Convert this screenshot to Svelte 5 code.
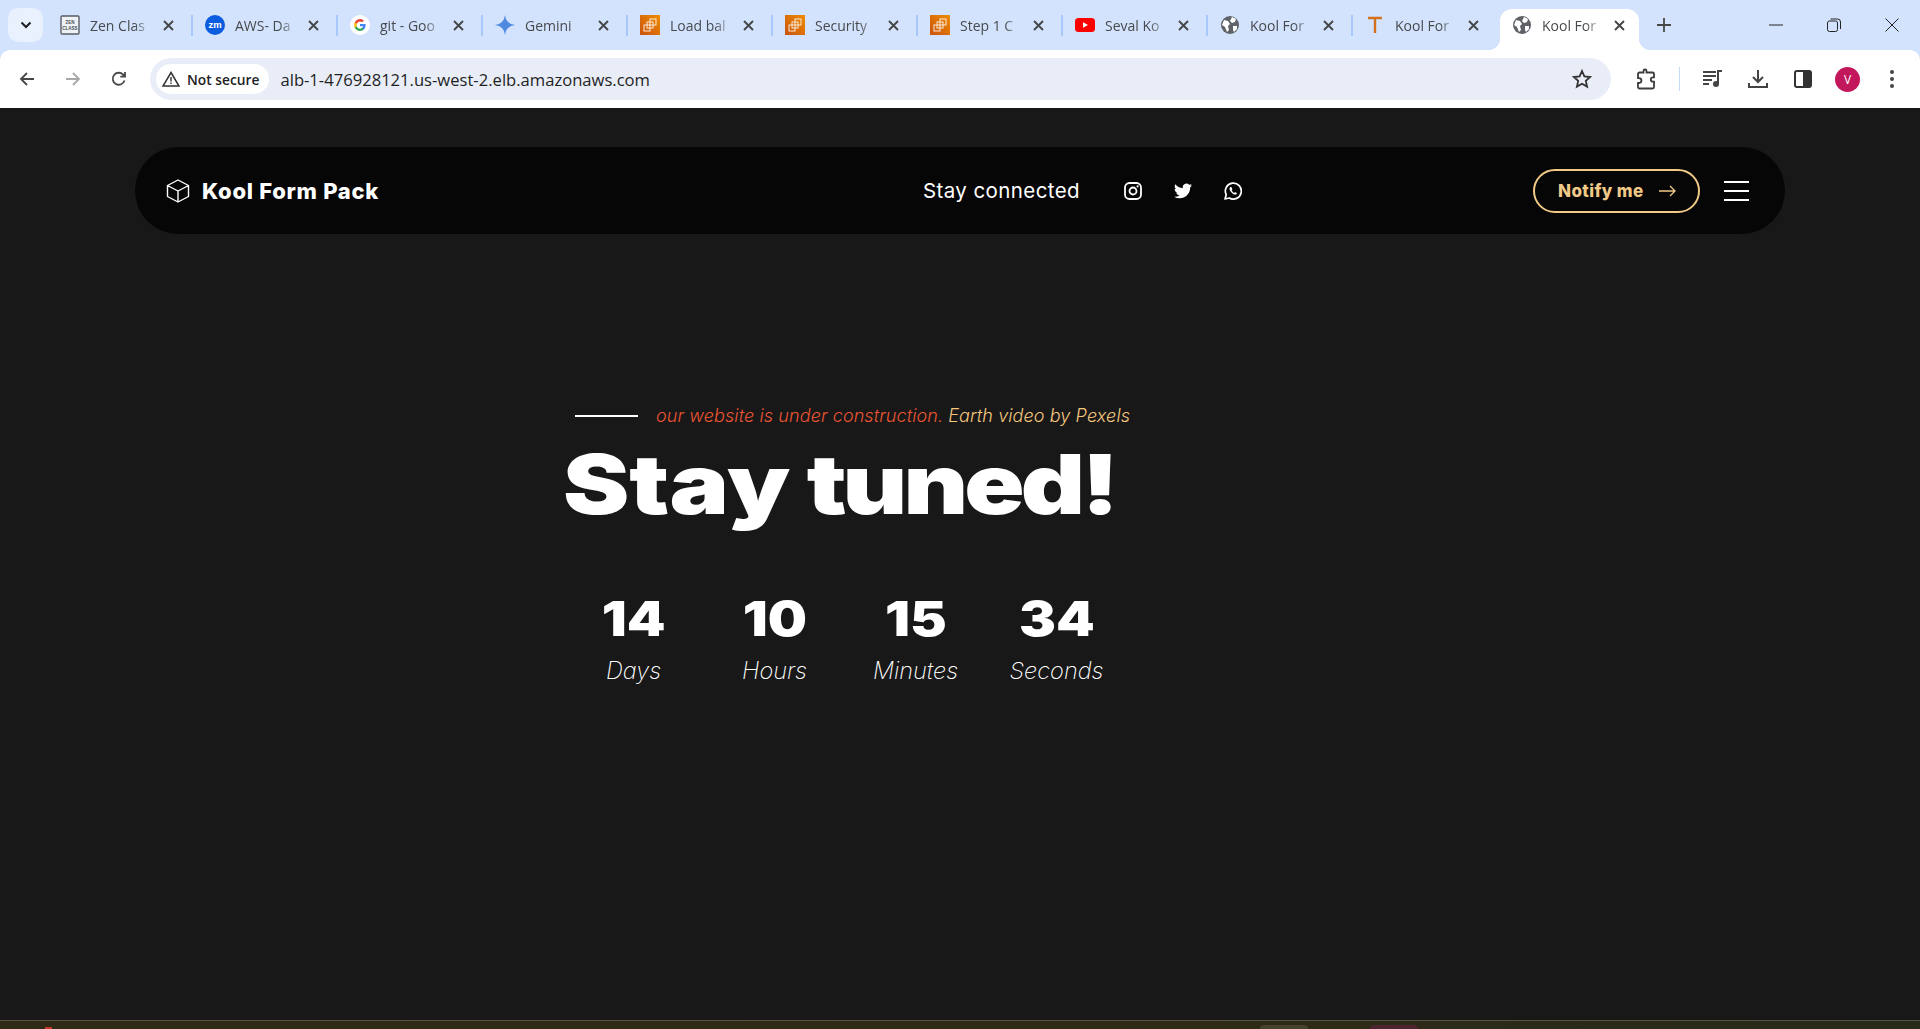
<script>
	const tabs = [
		{ title: 'Zen Clas', icon: 'zen' },
		{ title: 'AWS- Da', icon: 'zm' },
		{ title: 'git - Goo', icon: 'google' },
		{ title: 'Gemini', icon: 'gemini' },
		{ title: 'Load bal', icon: 'ec2' },
		{ title: 'Security', icon: 'ec2' },
		{ title: 'Step 1 C', icon: 'ec2' },
		{ title: 'Seval Ko', icon: 'yt' },
		{ title: 'Kool For', icon: 'globe' },
		{ title: 'Kool For', icon: 'tee' }
	];
	const countdown = [
		{ value: '14', label: 'Days' },
		{ value: '10', label: 'Hours' },
		{ value: '15', label: 'Minutes' },
		{ value: '34', label: 'Seconds' }
	];
</script>

{#snippet globe()}
	<svg width="18" height="18" viewBox="0 0 18 18">
		<circle cx="9" cy="9" r="9" fill="#5f6368" />
		<path d="M3 4l4 1 2 3-2 2 1 4-2 2-2-5-3-2zM11 1l4 2-1 3-3 1-2-2zM12 10l4 0 0 3-3 3-1-2z" fill="#fff" />
	</svg>
{/snippet}

{#snippet closeX()}
	<svg class="tab-x" width="11" height="11" viewBox="0 0 11 11"><path d="M1 1l9 9M10 1l-9 9" stroke="#444746" stroke-width="1.900" /></svg>
{/snippet}

{#snippet favicon(icon)}
	{#if icon === 'zen'}
		<svg width="20" height="20" viewBox="0 0 20 20">
			<rect x="1" y="1" width="18" height="18" rx="1" fill="#eef1f6" stroke="#5a5f66" stroke-width="1.400" />
			<text x="10" y="8.500" class="zen-text">ZEN</text>
			<text x="10" y="14.500" class="zen-text">CLASS</text>
		</svg>
	{:else if icon === 'zm'}
		<svg width="20" height="20" viewBox="0 0 20 20">
			<circle cx="10" cy="10" r="10" fill="#0b5cdf" />
			<text x="10" y="13" class="zm-text">zm</text>
		</svg>
	{:else if icon === 'google'}
		<svg width="20" height="20" viewBox="0 0 20 20">
			<circle cx="10" cy="10" r="10" fill="#fff" />
			<path d="M15.600 10.200c0-.4 0-.8-.1-1.200H10v2.300h3.100c-.1.800-.6 1.400-1.200 1.800v1.500h1.900c1.100-1 1.800-2.500 1.800-4.400z" fill="#4285f4" />
			<path d="M10 16c1.600 0 2.900-.5 3.800-1.400l-1.900-1.500c-.5.400-1.200.6-1.900.6-1.500 0-2.800-1-3.200-2.400h-2v1.500C5.800 14.700 7.700 16 10 16z" fill="#34a853" />
			<path d="M6.800 11.300c-.2-.8-.2-1.700 0-2.500V7.300h-2c-.9 1.700-.9 3.800 0 5.500z" fill="#fbbc05" />
			<path d="M10 6.400c.8 0 1.600.3 2.200.9l1.700-1.700C12.800 4.600 11.500 4 10 4 7.700 4 5.800 5.300 4.800 7.300l2 1.500c.4-1.400 1.700-2.400 3.200-2.400z" fill="#ea4335" />
		</svg>
	{:else if icon === 'gemini'}
		<svg width="20" height="20" viewBox="0 0 20 20">
			<path d="M10 0q1 9 10 10q-9 1-10 10q-1-9-10-10q9-1 10-10z" fill="#4f8ae0" />
		</svg>
	{:else if icon === 'ec2'}
		<svg width="20" height="20" viewBox="0 0 20 20">
			<defs>
				<linearGradient id="ec2-bg" x1="0" y1="1" x2="1" y2="0">
					<stop offset="0" stop-color="#c8530f" />
					<stop offset="1" stop-color="#f08c00" />
				</linearGradient>
			</defs>
			<rect width="20" height="20" fill="url(#ec2-bg)" />
			<g fill="none" stroke="#fff" stroke-width="1" opacity=".85">
				<rect x="10" y="4" width="6" height="6" />
				<rect x="7" y="7" width="6" height="6" />
				<rect x="4" y="10" width="6" height="6" />
			</g>
		</svg>
	{:else if icon === 'yt'}
		<svg width="20" height="20" viewBox="0 0 20 20">
			<rect y="3" width="20" height="14" rx="3.500" fill="#f00" />
			<path d="M8 7.200l5 2.800-5 2.800z" fill="#fff" />
		</svg>
	{:else if icon === 'tee'}
		<svg width="20" height="20" viewBox="0 0 20 20">
			<path d="M3 3h14M10 3v15" fill="none" stroke="#d2701c" stroke-width="2.400" />
		</svg>
	{:else}
		{@render globe()}
	{/if}
{/snippet}

<div class="window">
	<div class="tabstrip">
		<button class="tab-menu" aria-label="Search tabs">
			<svg width="12" height="8" viewBox="0 0 12 8"><path d="M1.500 1.500L6 6l4.500-4.500" fill="none" stroke="#1f1f1f" stroke-width="2" /></svg>
		</button>
		<div class="tabs">
			{#each tabs as tab}
				<div class="tab">
					<span class="fav">{@render favicon(tab.icon)}</span>
					<span class="tab-title">{tab.title}</span>
					{@render closeX()}
				</div>
			{/each}
			<div class="tab active">
				<span class="fav">{@render globe()}</span>
				<span class="tab-title">Kool For</span>
				{@render closeX()}
			</div>
			<svg class="new-tab" width="14" height="14" viewBox="0 0 14 14"><path d="M7 0v14M0 7h14" stroke="#444746" stroke-width="1.800" /></svg>
		</div>
		<div class="win-controls">
			<svg width="14" height="14" viewBox="0 0 14 14"><path d="M0 7h14" stroke="#222" stroke-width="1" /></svg>
			<svg width="14" height="14" viewBox="0 0 14 14"><rect x=".5" y="3" width="10" height="10.500" rx="2" fill="none" stroke="#222" /><path d="M3.500 1h7a3 3 0 0 1 3 3v7" fill="none" stroke="#222" /></svg>
			<svg width="14" height="14" viewBox="0 0 14 14"><path d="M.5.500l13 13M13.500.500l-13 13" stroke="#222" stroke-width="1" /></svg>
		</div>
	</div>

	<div class="toolbar">
		<div class="nav-btns">
			<svg width="16" height="16" viewBox="0 0 16 16"><path d="M15 8H2M8 2L2 8l6 6" fill="none" stroke="#474747" stroke-width="1.800" /></svg>
			<svg width="16" height="16" viewBox="0 0 16 16"><path d="M1 8h13M8 2l6 6-6 6" fill="none" stroke="#a8a8a8" stroke-width="1.800" /></svg>
			<svg width="16" height="16" viewBox="0 0 16 16"><path d="M13.500 9.500A6 6 0 1 1 12 3.500L14 5.500M14 1v4.700H9.300" fill="none" stroke="#474747" stroke-width="1.800" /></svg>
		</div>
		<div class="omnibox">
			<div class="chip">
				<svg width="18" height="16" viewBox="0 0 18 16"><path d="M9 1.500L17 15H1z" fill="none" stroke="#333" stroke-width="1.500" /><path d="M9 6v4.500M9 11.500v1.500" stroke="#333" stroke-width="1.400" /></svg>
				<span>Not secure</span>
			</div>
			<span class="url">alb-1-476928121.us-west-2.elb.amazonaws.com</span>
			<svg class="star" width="20" height="20" viewBox="0 0 20 20"><path d="M10 2l2.400 5.400 5.800.6-4.400 3.900 1.300 5.700L10 14.700l-5.100 2.900 1.300-5.700L1.800 8l5.800-.6z" fill="none" stroke="#333" stroke-width="1.800" /></svg>
		</div>
		<div class="tool-icons">
			<svg width="20" height="22" viewBox="0 0 20 22"><path d="M7 4V2.500a1.500 1.500 0 0 1 3 0V4h6a1.500 1.500 0 0 1 1.500 1.500v3.300h-1a2.200 2.200 0 0 0 0 4.400h1v5.300A1.500 1.500 0 0 1 16 20H3a1.500 1.500 0 0 1-1.500-1.500v-4h1a2.400 2.400 0 0 0 0-4.800h-1V5.500A1.500 1.500 0 0 1 3 4z" transform="translate(.5 .5)" fill="none" stroke="#3c3c3c" stroke-width="1.800" /></svg>
			<span class="tool-sep"></span>
			<svg width="20" height="18" viewBox="0 0 20 18"><path d="M0 2h13M0 6h13M0 10h9M0 14h6" stroke="#444" stroke-width="1.800" /><path d="M15 13V1h4" fill="none" stroke="#444" stroke-width="2" /><circle cx="13" cy="14" r="3" fill="#444" /></svg>
			<svg class="ml-2" width="20" height="20" viewBox="0 0 20 20"><path d="M10 1v12M5 8l5 5 5-5M1 14v4h18v-4" fill="none" stroke="#444" stroke-width="2" /></svg>
			<svg class="ml-3" width="18" height="18" viewBox="0 0 18 18"><rect x="1" y="1" width="16" height="16" rx="2" fill="none" stroke="#333" stroke-width="2" /><rect x="9" y="1" width="8" height="16" fill="#333" /></svg>
			<span class="avatar">V</span>
			<svg class="more" width="4" height="18" viewBox="0 0 4 18"><circle cx="2" cy="2" r="2" fill="#444" /><circle cx="2" cy="9" r="2" fill="#444" /><circle cx="2" cy="16" r="2" fill="#444" /></svg>
		</div>
	</div>

	<main class="page">
		<nav class="navbar">
			<div class="brand">
				<svg width="24" height="24" viewBox="0 0 24 24"><path d="M12 1l10.500 5.500v11L12 23 1.500 17.500v-11zM1.500 6.500L12 12l10.500-5.500M12 12v11" fill="none" stroke="#fff" stroke-width="1.400" stroke-linejoin="round" /></svg>
				<span>Kool Form Pack</span>
			</div>
			<div class="social">
				<span class="social-label">Stay connected</span>
				<svg width="18" height="18" viewBox="0 0 18 18"><rect x="1" y="1" width="16" height="16" rx="4.500" fill="none" stroke="#fff" stroke-width="1.800" /><circle cx="9" cy="9" r="3.500" fill="none" stroke="#fff" stroke-width="1.800" /><circle cx="13.600" cy="4.400" r="1.100" fill="#fff" /></svg>
				<svg width="18" height="18" viewBox="0 0 24 24"><path d="M23.950 4.570a10 10 0 0 1-2.820.77 4.960 4.960 0 0 0 2.160-2.720c-.95.55-2 .96-3.130 1.180a4.920 4.920 0 0 0-8.380 4.480C7.690 8.100 4.070 6.130 1.640 3.160a4.820 4.820 0 0 0-.67 2.480c0 1.710.87 3.210 2.190 4.100a4.900 4.900 0 0 1-2.230-.62v.06a4.920 4.920 0 0 0 3.950 4.830 5 5 0 0 1-2.210.08 4.940 4.940 0 0 0 4.600 3.420A9.870 9.870 0 0 1 0 19.540a14 14 0 0 0 7.560 2.210c9.050 0 14-7.500 14-13.980 0-.21 0-.42-.01-.63.96-.7 1.800-1.560 2.460-2.550z" fill="#fff" /></svg>
				<svg width="18" height="18" viewBox="0 0 18 18"><path d="M1 17l1.200-4.300A8 8 0 1 1 5.300 16z" fill="none" stroke="#fff" stroke-width="1.700" stroke-linejoin="round" /><path d="M6.300 5c-1.300 1 -1 3 .7 5s4 3.200 5.300 2.300l.7-1-2-1.200-.9.800c-1-.4-2-1.400-2.500-2.600l.8-.8L7.400 5z" fill="#fff" /></svg>
			</div>
			<div class="nav-actions">
				<button class="notify">
					<span>Notify me</span>
					<svg width="17" height="12" viewBox="0 0 17 12"><path d="M0 6h16M11 1l5 5-5 5" fill="none" stroke="#f0c987" stroke-width="1.300" /></svg>
				</button>
				<button class="burger" aria-label="Menu"><i></i><i></i><i></i></button>
			</div>
		</nav>

		<section class="hero">
			<p class="tagline">
				<span class="rule"></span>
				<em class="red">our website is under construction.</em>
				<em class="gold">Earth video by Pexels</em>
			</p>
			<h1><span class="stay">Stay</span> <span class="tuned">tuned!</span></h1>
			<div class="timer">
				{#each countdown as item}
					<div class="cell">
						<strong>{item.value}</strong>
						<span>{item.label}</span>
					</div>
				{/each}
			</div>
		</section>
	</main>

	<div class="taskbar">
		<span class="task-red"></span>
		<span class="task-box"></span>
		<span class="task-box pink"></span>
	</div>
</div>

<style>
	:global(body) {
		margin: 0;
		background: #181818;
	}

	.window {
		display: flex;
		flex-direction: column;
		height: 1029px;
		overflow: hidden;
		background: #d3e3fd;
		font-family: 'Open Sans', sans-serif;
	}

	.tabstrip {
		display: flex;
		align-items: flex-end;
		flex: none;
		height: 50px;
		position: relative;
	}

	.tab-menu {
		display: flex;
		align-items: center;
		justify-content: center;
		width: 35px;
		height: 34px;
		margin: 0 4px 8px 8px;
		padding: 0;
		border: 0;
		border-radius: 10px;
		background: #e9f0fe;
	}

	.tabs {
		display: flex;
		align-items: center;
		flex: 1;
		height: 42px;
	}

	.tab {
		display: flex;
		align-items: center;
		box-sizing: border-box;
		width: 145px;
		height: 42px;
		padding: 0 14px 8px 13px;
		position: relative;
	}

	.tab::after {
		content: '';
		position: absolute;
		top: 7px;
		right: -1px;
		width: 2px;
		height: 21px;
		background: #a8c7fa;
	}

	.tab:nth-child(10)::after {
		display: none;
	}

	.fav {
		display: flex;
		flex: none;
		width: 20px;
		margin-right: 10px;
		justify-content: center;
	}

	.zen-text {
		font-family: 'Liberation Sans', sans-serif;
		font-size: 4.500px;
		font-weight: 700;
		text-anchor: middle;
		fill: #4a4f55;
	}

	.zm-text {
		font-family: 'Liberation Sans', sans-serif;
		font-size: 9.500px;
		font-weight: 700;
		text-anchor: middle;
		fill: #fff;
	}

	.tab-title {
		flex: 1;
		overflow: hidden;
		white-space: nowrap;
		font-size: 14px;
		color: #474a4d;
		-webkit-mask-image: linear-gradient(to right, #000 70%, transparent 100%);
		mask-image: linear-gradient(to right, #000 70%, transparent 100%);
	}

	.tab-x {
		flex: none;
		margin: 0 4px 0 10px;
	}

	.tab.active {
		width: 139px;
		height: 41px;
		margin: 1px 0 0 3px;
		padding: 0 10px 9px 12px;
		border-radius: 12px 12px 0 0;
		background: #fff;
	}

	.tab.active::before,
	.tab.active::after {
		content: '';
		position: absolute;
		top: auto;
		bottom: 0;
		width: 12px;
		height: 12px;
	}

	.tab.active::before {
		left: -12px;
		background: radial-gradient(circle at 0 0, transparent 12px, #fff 12.500px);
	}

	.tab.active::after {
		right: -12px;
		background: radial-gradient(circle at 100% 0, transparent 12px, #fff 12.500px);
	}

	.new-tab {
		margin: 0 0 8px 18px;
	}

	.win-controls {
		position: absolute;
		top: 18px;
		right: 21px;
		display: flex;
		gap: 44px;
	}

	.toolbar {
		display: flex;
		align-items: center;
		flex: none;
		height: 58px;
		background: #fff;
		border-radius: 10px 10px 0 0;
	}

	.nav-btns {
		display: flex;
		gap: 30px;
		padding: 0 23px 0 19px;
	}

	.omnibox {
		display: flex;
		align-items: center;
		box-sizing: border-box;
		width: 1461px;
		height: 42px;
		padding: 0 19px 0 6px;
		border-radius: 21px;
		background: #e9edf7;
	}

	.chip {
		display: flex;
		align-items: center;
		gap: 7px;
		height: 30px;
		box-sizing: border-box;
		padding: 0 10px 0 6px;
		border-radius: 15px;
		background: #fff;
		font-size: 13.800px;
		font-weight: 600;
		color: #1f1f1f;
	}

	.url {
		margin-left: 11px;
		font-size: 16.600px;
		color: #1f1f1f;
	}

	.star {
		margin-left: auto;
	}

	.tool-icons {
		display: flex;
		align-items: center;
		gap: 23px;
		padding-left: 25px;
	}

	.tool-sep {
		width: 1px;
		height: 24px;
		background: #c7d8f5;
	}

	.ml-2 {
		margin-left: 2px;
	}

	.ml-3 {
		margin-left: 3px;
	}

	.more {
		margin-left: 7px;
	}

	.avatar {
		display: flex;
		align-items: center;
		justify-content: center;
		width: 25px;
		height: 25px;
		border-radius: 50%;
		background: #c2185b;
		color: #fff;
		font-size: 12px;
	}

	.page {
		flex: 1;
		background: #181818;
		padding: 39px 135px 0;
	}

	.navbar {
		display: flex;
		align-items: center;
		height: 87px;
		padding: 0 36px 0 31px;
		border-radius: 44px;
		background: #060606;
		color: #fff;
		font-family: Inter, sans-serif;
	}

	.brand {
		display: flex;
		align-items: center;
		flex: 0 0 757px;
		gap: 12px;
		font-size: 22px;
		font-weight: 800;
		letter-spacing: .7px;
	}

	.social {
		display: flex;
		align-items: center;
		gap: 32px;
	}

	.social-label {
		margin-right: 12px;
		font-size: 20.500px;
		letter-spacing: .4px;
	}

	.nav-actions {
		display: flex;
		align-items: center;
		gap: 24px;
		margin-left: auto;
	}

	.notify {
		display: flex;
		align-items: center;
		gap: 15px;
		box-sizing: border-box;
		width: 167px;
		height: 44px;
		padding: 0 0 0 23px;
		border: 2px solid #f0c987;
		border-radius: 22px;
		background: none;
		color: #f0c987;
		font-family: Inter, sans-serif;
		font-size: 17px;
		font-weight: 800;
		letter-spacing: .4px;
	}

	.burger {
		display: flex;
		flex-direction: column;
		gap: 7px;
		width: 25px;
		padding: 0;
		border: 0;
		background: none;
	}

	.burger i {
		height: 2px;
		background: #fff;
	}

	.hero {
		margin: 169px 0 0 428px;
		color: #fff;
		font-family: Inter, sans-serif;
	}

	.tagline {
		display: flex;
		align-items: center;
		gap: 5px;
		margin: 0 0 0 12px;
		font-size: 18px;
		font-weight: 300;
		letter-spacing: .1px;
		line-height: 26px;
	}

	.rule {
		width: 63px;
		height: 2px;
		margin-right: 13px;
		background: #fff;
	}

	.red {
		color: #ea5433;
	}

	.gold {
		color: #f4c67e;
	}

	h1 {
		margin: 10px 0 0;
		font-size: 83px;
		line-height: 90px;
		font-weight: 900;
		word-spacing: -3px;
		white-space: nowrap;
		transform: scaleX(1.2);
		transform-origin: left;
	}

	.stay {
		letter-spacing: 0;
	}

	.tuned {
		letter-spacing: -3.200px;
	}

	.timer {
		display: flex;
		margin: 62px 0 0;
	}

	.cell {
		display: flex;
		flex-direction: column;
		align-items: center;
		width: 141px;
	}

	.cell strong {
		font-size: 48px;
		line-height: 56px;
		font-weight: 900;
		transform: scaleX(1.15);
	}

	.cell span {
		margin-top: 8px;
		font-size: 23.500px;
		font-weight: 200;
		font-style: italic;
		line-height: 32px;
	}

	.taskbar {
		flex: none;
		height: 9px;
		box-sizing: border-box;
		border-top: 1px solid #55533f;
		background: linear-gradient(to right, #2e2a16, #2f2a17 60%, #282a1a);
		position: relative;
	}

	.task-red {
		position: absolute;
		left: 45px;
		bottom: 0;
		width: 7px;
		height: 2px;
		background: #c8352b;
	}

	.task-box {
		position: absolute;
		left: 1260px;
		bottom: 0;
		width: 48px;
		height: 4px;
		border-radius: 4px 4px 0 0;
		background: #45422f;
	}

	.task-box.pink {
		left: 1370px;
		background: #4d2530;
	}
</style>
